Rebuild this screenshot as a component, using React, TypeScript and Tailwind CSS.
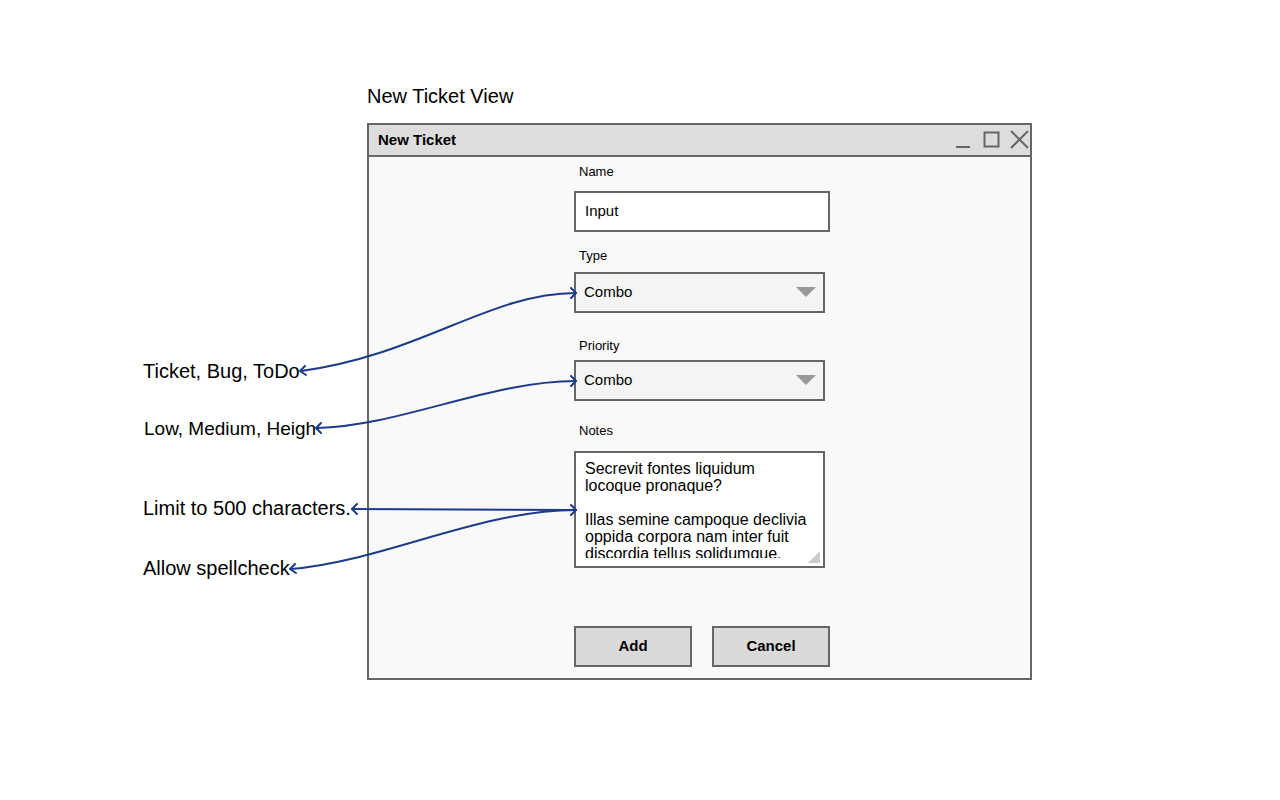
import React from "react";

const font = "font-['Liberation_Sans',Arial,sans-serif]";

function Field({ label, top, gap, children }: { label: string; top: string; gap: string; children: React.ReactNode }) {
  return (
    <div className={top}>
      <div className="text-[13px] leading-[16px] text-black pl-[5px]">{label}</div>
      <div className={gap}>{children}</div>
    </div>
  );
}

function Combo({ top }: { top: string }) {
  return (
    <div className={`${top} w-[251px] h-[41px] border-2 border-[#666] bg-[#f4f4f4] flex items-center justify-between pl-[8px] pr-[7px]`}>
      <span className="text-[15px] text-black">Combo</span>
      <svg width="20" height="11" viewBox="0 0 20 11">
        <path d="M0 0 H20 L10 10 Z" fill="#999" />
      </svg>
    </div>
  );
}

export default function App() {
  const blue = "#1c3b89";
  return (
    <div className={`relative w-[1280px] h-[800px] bg-white overflow-hidden ${font}`}>
      <div className="pl-[367px] pt-[84px]">
        <div className="text-[20px] leading-[24px] text-black">New Ticket View</div>

        {/* window */}
        <div className="mt-[15px] w-[665px] h-[557px] border-2 border-[#666] bg-[#f9f9f9] flex flex-col">
          <div className="h-[32px] border-b-2 border-[#666] bg-[#dddddd] flex items-center justify-between pl-[9px]">
            <span className="text-[15px] font-bold text-black">New Ticket</span>
            <svg width="79" height="30" viewBox="0 0 79 30" className="shrink-0">
              <g stroke="#666" strokeWidth="2" fill="none">
                <path d="M5 22 H19" />
                <rect x="33.5" y="7.5" width="14" height="14" />
                <path d="M60 6 L77 23 M77 6 L60 23" />
              </g>
            </svg>
          </div>

          <div className="pl-[205px] flex flex-col">
            <Field label="Name" top="mt-[7px]" gap="mt-[11px]">
              <div className="w-[256px] h-[41px] border-2 border-[#666] bg-white flex items-center pl-[9px]">
                <span className="text-[15px] text-black">Input</span>
              </div>
            </Field>

            <Field label="Type" top="mt-[16px]" gap="">
              <Combo top="mt-[8px]" />
            </Field>

            <Field label="Priority" top="mt-[25px]" gap="">
              <Combo top="mt-[6px]" />
            </Field>

            <Field label="Notes" top="mt-[22px]" gap="mt-[12px]">
              <div className="relative w-[251px] h-[117px] border-2 border-[#666] bg-white pl-[9px] pr-[13px] pt-[7px]">
                <div className="h-[98px] overflow-hidden text-[16px] leading-[17px] text-black">
                  <p>Secrevit fontes liquidum locoque pronaque?</p>
                  <p className="mt-[17px]">Illas semine campoque declivia oppida corpora nam inter fuit discordia tellus solidumque.</p>
                </div>
                <svg width="12" height="12" viewBox="0 0 12 12" className="absolute right-[3px] bottom-[3px]">
                  <path d="M12 0 V12 H0 Z" fill="#ccc" />
                </svg>
              </div>
            </Field>

            <div className="mt-[58px] flex gap-[20px]">
              <button className="w-[118px] h-[41px] border-2 border-[#666] bg-[#dadada] text-[15px] font-bold text-black">Add</button>
              <button className="w-[118px] h-[41px] border-2 border-[#666] bg-[#dadada] text-[15px] font-bold text-black">Cancel</button>
            </div>
          </div>
        </div>
      </div>

      {/* annotation labels */}
      <div className="absolute left-[143px] top-[359px] text-[20px] leading-[24px] text-black">Ticket, Bug, ToDo</div>
      <div className="absolute left-[144px] top-[417px] text-[19px] leading-[23px] text-black">Low, Medium, Heigh</div>
      <div className="absolute left-[143px] top-[496px] text-[20px] leading-[24px] text-black">Limit to 500 characters.</div>
      <div className="absolute left-[143px] top-[556px] text-[20px] leading-[24px] text-black">Allow spellcheck</div>

      {/* connectors */}
      <svg className="absolute inset-0 pointer-events-none" width="1280" height="800" viewBox="0 0 1280 800">
        <g stroke={blue} strokeWidth="2" fill="none" strokeLinecap="round" strokeLinejoin="round">
          <path d="M301 371 C420 355, 490 293, 576 293" />
          <path d="M571 288 L576 293 L571 298" />
          <path d="M305 366 L300 371 L306 375" />

          <path d="M317 428 C400 426, 490 381, 576 381" />
          <path d="M571 376 L576 381 L571 386" />
          <path d="M321 423 L316 428 L321 433" />

          <path d="M352 509 L576 510" />
          <path d="M571 505 L576 510 L571 515" />
          <path d="M357 504 L352 509 L357 514" />

          <path d="M291 569 C380 562, 480 510, 576 510" />
          <path d="M295 564 L290 569 L296 573" />
        </g>
      </svg>
    </div>
  );
}
